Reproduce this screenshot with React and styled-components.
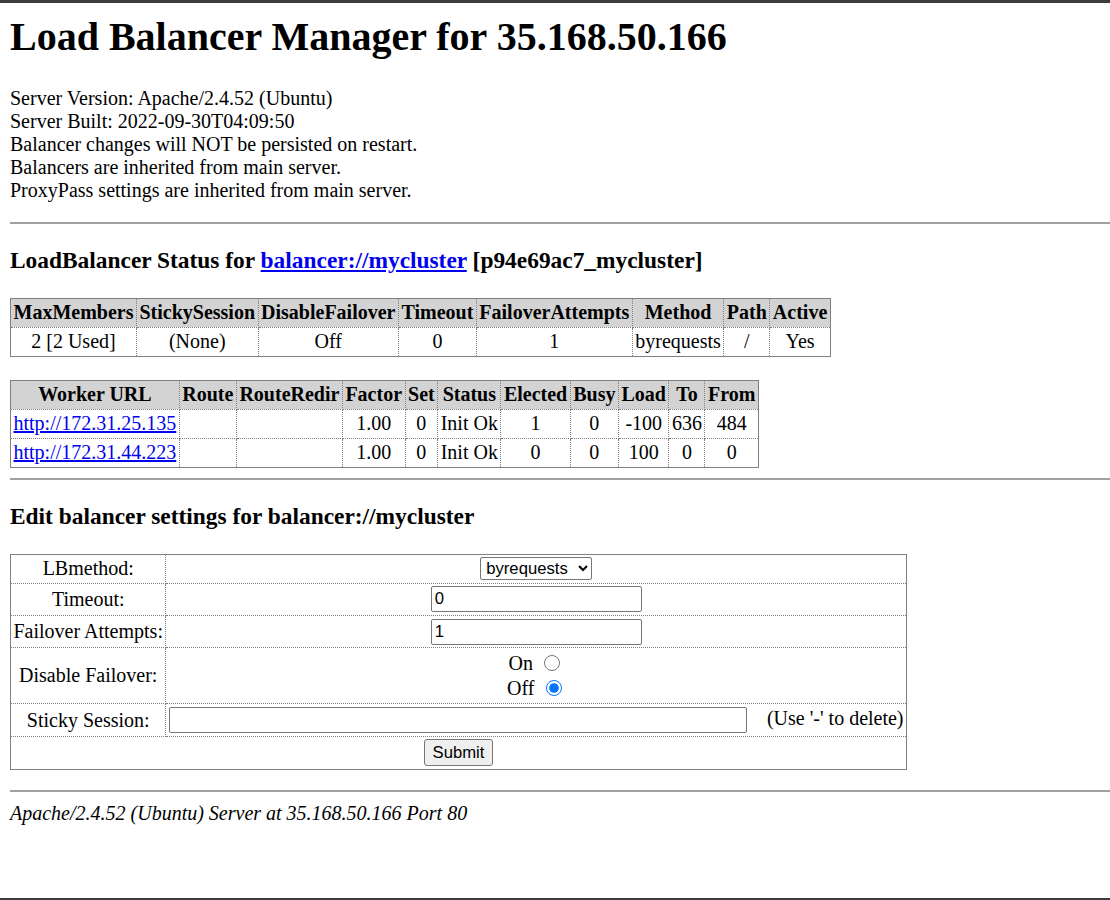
import React from 'react';
import styled, { createGlobalStyle } from 'styled-components';

const GlobalStyle = createGlobalStyle`
  html, body {
    margin: 0;
    padding: 0;
    background: white;
  }
  body {
    font-family: "Liberation Serif", "Times New Roman", serif;
    color: #000;
  }
`;

const Page = styled.div`
  min-height: 900px;
  box-sizing: border-box;
  border-top: 3px solid #3c3c3c;
  border-bottom: 2px solid #3c3c3c;
  padding: 11px 0 0 10px;
  font-size: 20px;
  line-height: 23px;
`;

const Title = styled.h1`
  margin: 0 0 27px;
  font-size: 40px;
  line-height: 46px;
  font-weight: bold;
`;

const InfoList = styled.dl`
  margin: 0 0 20px;
`;

const InfoItem = styled.dt`
  margin: 0;
`;

const Rule = styled.hr`
  margin: 10px 0;
  height: 0;
  border: none;
  border-top: 2px solid #a0a0a0;
`;

const SectionTitle = styled.h3`
  margin: 23.4px 0;
  font-size: 23.4px;
  line-height: 27px;
  font-weight: bold;
`;

const Link = styled.a`
  color: #0000ee;
  text-decoration: underline;
`;

const DataTable = styled.table`
  border: 1px solid gray;
  border-collapse: collapse;
  background: white;
  text-align: center;
  font-size: 20px;
  line-height: 23px;
`;

const HeadCell = styled.th`
  border: 1px dotted gray;
  padding: 2.5px;
  background: lightgray;
  text-align: center;
  font-weight: bold;
  white-space: nowrap;
`;

const Cell = styled.td`
  border: 1px dotted gray;
  padding: 2.5px;
  background: white;
  text-align: center;
  white-space: nowrap;
`;

const Gap = styled.div`
  height: 23px;
`;

const EditForm = styled.form`
  margin: 0 0 20px;
`;

const TextInput = styled.input`
  box-sizing: border-box;
  width: ${(p) => p.$width}px;
  height: 26px;
  padding: 1px 3px;
  border: 1px solid #767676;
  border-radius: 2px;
  font-family: "Liberation Sans", Arial, sans-serif;
  font-size: 16.67px;
  vertical-align: middle;
  background: white;
  color: #000;
`;

const Select = styled.select`
  height: 23px;
  font-family: "Liberation Sans", Arial, sans-serif;
  font-size: 16.67px;
  border: 1px solid #767676;
  border-radius: 2px;
  background: white;
  color: #000;
  padding: 0 1px;
  vertical-align: top;
`;

const Radio = styled.input`
  width: 16px;
  height: 16px;
  margin: 3.75px 3.75px 0 6.25px;
  vertical-align: top;
  accent-color: #0075ff;
`;

const RadioLine = styled.div`
  line-height: 25px;
`;

const SubmitButton = styled.button`
  height: 27px;
  padding: 1px 8px;
  font-family: "Liberation Sans", Arial, sans-serif;
  font-size: 16.67px;
  color: #000;
  background: #efefef;
  border: 1px solid #767676;
  border-radius: 3px;
  vertical-align: middle;
`;

const Footer = styled.address`
  font-style: italic;
`;

const statusHead = ['MaxMembers', 'StickySession', 'DisableFailover', 'Timeout', 'FailoverAttempts', 'Method', 'Path', 'Active'];
const statusRow = ['2 [2 Used]', '(None)', 'Off', '0', '1', 'byrequests', '/', 'Yes'];

const workerHead = ['Worker URL', 'Route', 'RouteRedir', 'Factor', 'Set', 'Status', 'Elected', 'Busy', 'Load', 'To', 'From'];
const workers = [
  ['http://172.31.25.135', '', '', '1.00', '0', 'Init Ok', '1', '0', '-100', '636', '484'],
  ['http://172.31.44.223', '', '', '1.00', '0', 'Init Ok', '0', '0', '100', '0', '0'],
];

export default function App() {
  return (
    <Page>
      <GlobalStyle />
      <Title>Load Balancer Manager for 35.168.50.166</Title>
      <InfoList>
        <InfoItem>Server Version: Apache/2.4.52 (Ubuntu)</InfoItem>
        <InfoItem>Server Built: 2022-09-30T04:09:50</InfoItem>
        <InfoItem>Balancer changes will NOT be persisted on restart.</InfoItem>
        <InfoItem>Balancers are inherited from main server.</InfoItem>
        <InfoItem>ProxyPass settings are inherited from main server.</InfoItem>
      </InfoList>
      <Rule />
      <SectionTitle>
        LoadBalancer Status for <Link href="#">balancer://mycluster</Link> [p94e69ac7_mycluster]
      </SectionTitle>
      <DataTable>
        <tbody>
          <tr>
            {statusHead.map((h) => (
              <HeadCell key={h}>{h}</HeadCell>
            ))}
          </tr>
          <tr>
            {statusRow.map((v, i) => (
              <Cell key={i}>{v}</Cell>
            ))}
          </tr>
        </tbody>
      </DataTable>
      <Gap />
      <DataTable>
        <tbody>
          <tr>
            {workerHead.map((h) => (
              <HeadCell key={h}>{h}</HeadCell>
            ))}
          </tr>
          {workers.map((row) => (
            <tr key={row[0]}>
              {row.map((v, i) => (
                <Cell key={i}>{i === 0 ? <Link href="#">{v}</Link> : v}</Cell>
              ))}
            </tr>
          ))}
        </tbody>
      </DataTable>
      <Rule />
      <SectionTitle>Edit balancer settings for balancer://mycluster</SectionTitle>
      <EditForm onSubmit={(e) => e.preventDefault()}>
        <DataTable>
          <tbody>
            <tr>
              <Cell>LBmethod:</Cell>
              <Cell>
                <Select defaultValue="byrequests">
                  <option value="byrequests">byrequests</option>
                  <option value="bytraffic">bytraffic</option>
                  <option value="bybusyness">bybusyness</option>
                  <option value="heartbeat">heartbeat</option>
                </Select>
              </Cell>
            </tr>
            <tr>
              <Cell>Timeout:</Cell>
              <Cell>
                <TextInput type="text" $width={211} defaultValue="0" />
              </Cell>
            </tr>
            <tr>
              <Cell>Failover Attempts:</Cell>
              <Cell>
                <TextInput type="text" $width={211} defaultValue="1" />
              </Cell>
            </tr>
            <tr>
              <Cell>Disable Failover:</Cell>
              <Cell>
                <RadioLine>
                  On <Radio type="radio" name="b_sforce" value="1" />
                </RadioLine>
                <RadioLine>
                  Off <Radio type="radio" name="b_sforce" value="0" defaultChecked />
                </RadioLine>
              </Cell>
            </tr>
            <tr>
              <Cell>Sticky Session:</Cell>
              <Cell>
                <TextInput type="text" $width={578} defaultValue="" />
                {'\u00a0\u00a0\u00a0\u00a0'}(Use '-' to delete)
              </Cell>
            </tr>
            <tr>
              <Cell colSpan={2}>
                <SubmitButton type="submit">Submit</SubmitButton>
              </Cell>
            </tr>
          </tbody>
        </DataTable>
      </EditForm>
      <Rule />
      <Footer>Apache/2.4.52 (Ubuntu) Server at 35.168.50.166 Port 80</Footer>
    </Page>
  );
}
